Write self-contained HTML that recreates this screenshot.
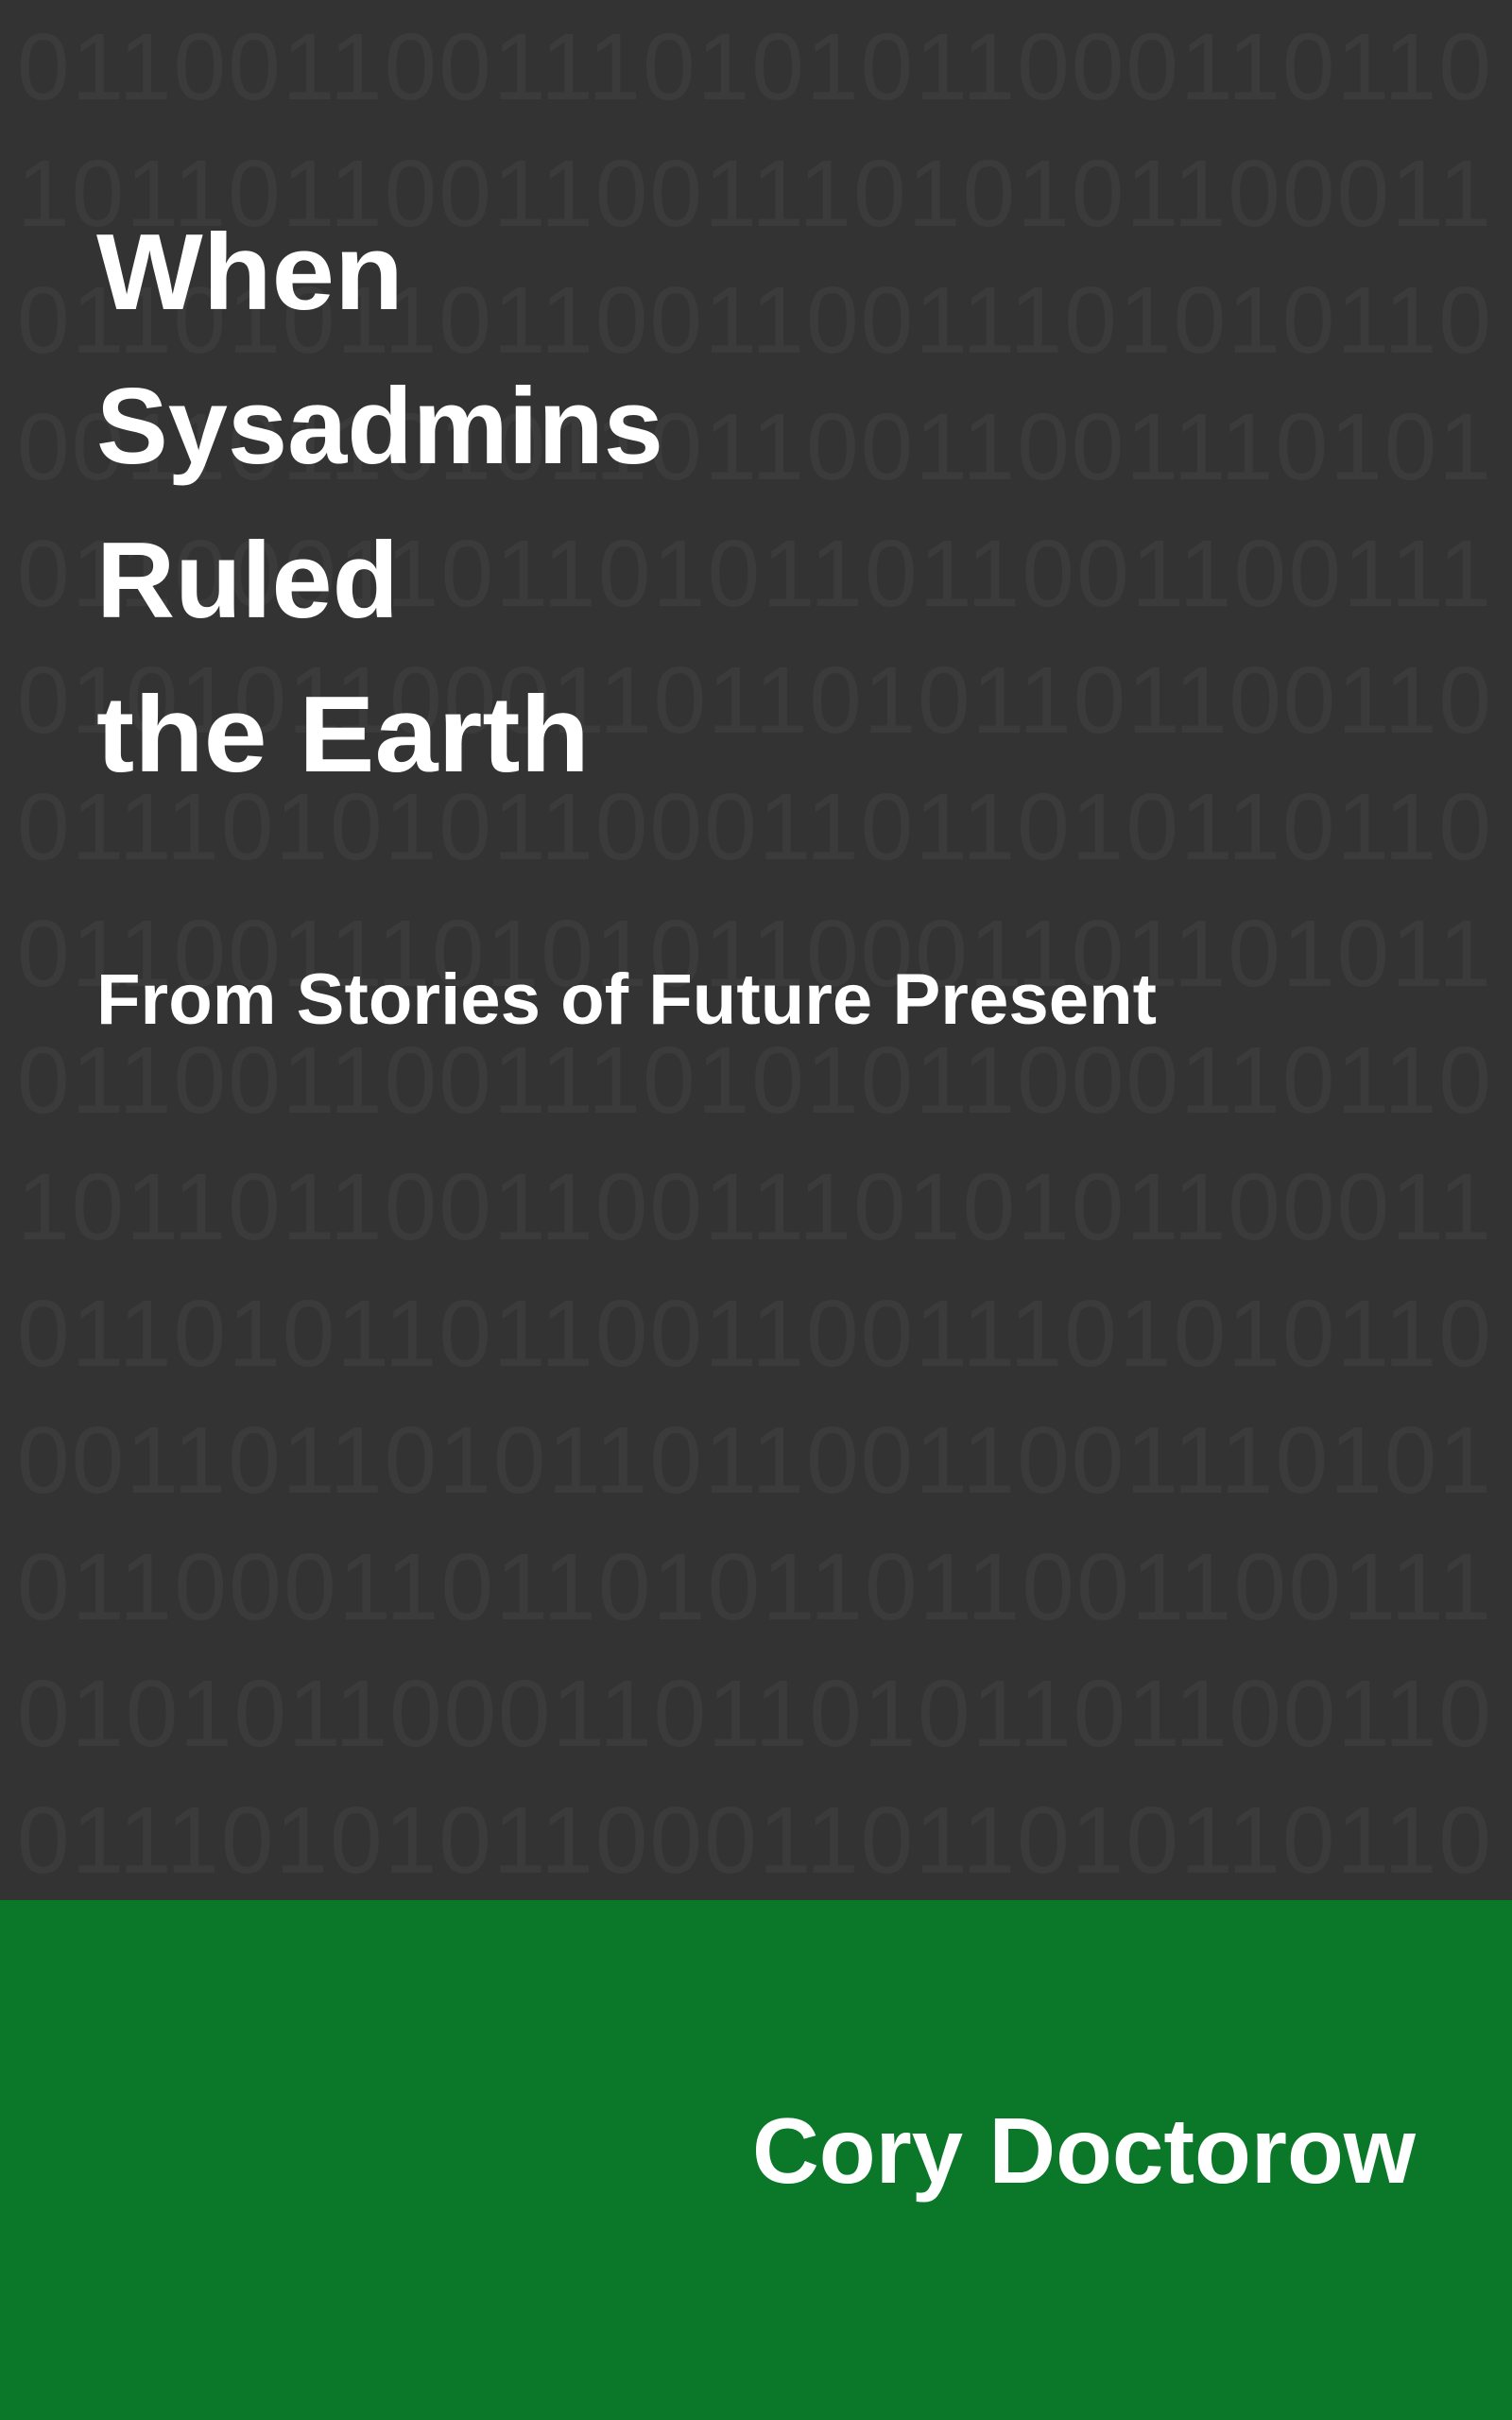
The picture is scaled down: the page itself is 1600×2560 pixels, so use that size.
<!DOCTYPE html>
<html><head><meta charset="utf-8"><style>
html,body{margin:0;padding:0;background:#333;}
svg{display:block}
</style></head><body>
<svg width="1600" height="2560" viewBox="0 0 1600 2560" xmlns="http://www.w3.org/2000/svg">
<rect x="0" y="0" width="1600" height="2010" fill="#333333"/>
<rect x="0" y="2010" width="1600" height="550" fill="#0a7729"/>
<g font-family="Liberation Sans, sans-serif" font-size="100" fill="#3b3b3b">
<text x="18" y="105" textLength="1560">0110011001110101011000110110</text>
<text x="18" y="239" textLength="1560">1011011001100111010101100011</text>
<text x="18" y="373" textLength="1560">0110101101100110011101010110</text>
<text x="18" y="507" textLength="1560">0011011010110110011001110101</text>
<text x="18" y="641" textLength="1560">0110001101101011011001100111</text>
<text x="18" y="775" textLength="1560">0101011000110110101101100110</text>
<text x="18" y="909" textLength="1560">0111010101100011011010110110</text>
<text x="18" y="1043" textLength="1560">0110011101010110001101101011</text>
<text x="18" y="1177" textLength="1560">0110011001110101011000110110</text>
<text x="18" y="1311" textLength="1560">1011011001100111010101100011</text>
<text x="18" y="1445" textLength="1560">0110101101100110011101010110</text>
<text x="18" y="1579" textLength="1560">0011011010110110011001110101</text>
<text x="18" y="1713" textLength="1560">0110001101101011011001100111</text>
<text x="18" y="1847" textLength="1560">0101011000110110101101100110</text>
<text x="18" y="1981" textLength="1560">0111010101100011011010110110</text>
</g>
<g font-family="Liberation Sans, sans-serif" font-weight="bold" fill="#ffffff">
<text x="102" y="327" font-size="114" textLength="325" lengthAdjust="spacingAndGlyphs">When</text>
<text x="102" y="490" font-size="114" textLength="600" lengthAdjust="spacingAndGlyphs">Sysadmins</text>
<text x="102" y="653" font-size="114" textLength="320" lengthAdjust="spacingAndGlyphs">Ruled</text>
<text x="102" y="816" font-size="114" textLength="522" lengthAdjust="spacingAndGlyphs">the Earth</text>
<text x="102" y="1083" font-size="76" textLength="1122" lengthAdjust="spacingAndGlyphs">From Stories of Future Present</text>
<text x="796" y="2309" font-size="98" textLength="702" lengthAdjust="spacingAndGlyphs">Cory Doctorow</text>
</g>
</svg>
</body></html>
